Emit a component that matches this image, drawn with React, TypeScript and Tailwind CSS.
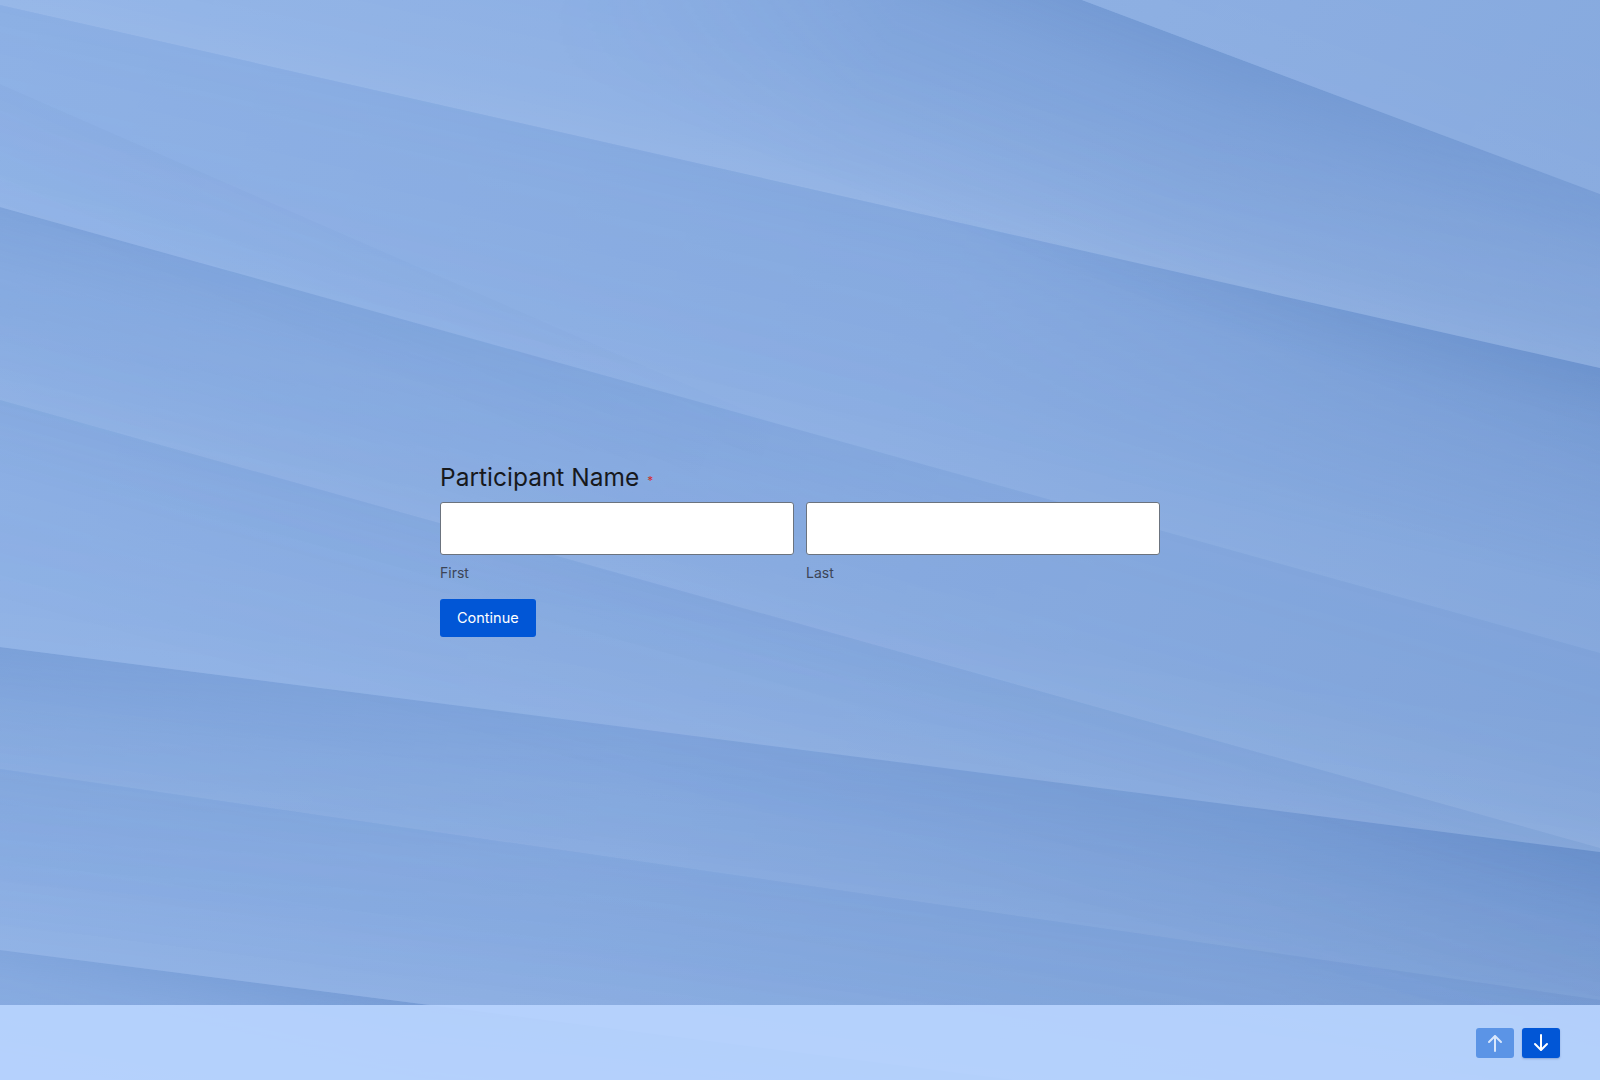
import React from 'react';

type Stop = [number, number];

type BandProps = {
  id: string;
  from: [number, number];
  to: [number, number];
  depth: number;
  color: string;
  alpha: Stop[];
  above?: boolean;
};

// one soft fold of the backdrop: a strip laid along a line, fading away from it
function Band({ id, from, to, depth, color, alpha, above }: BandProps) {
  const dx = to[0] - from[0];
  const dy = to[1] - from[1];
  const len = Math.hypot(dx, dy);
  const angle = (Math.atan2(dy, dx) * 180) / Math.PI;
  const ext = 500;
  const total = len + ext * 2;
  const y = above ? -depth : 0;
  // fade out at both far ends so the strip never shows a hard edge
  const stops: Stop[] = [[-ext / len, 0], ...alpha, [1 + ext / len, 0]];

  return (
    <g transform={`translate(${from[0]} ${from[1]}) rotate(${angle})`}>
      <defs>
        <linearGradient id={`${id}-f`} x1="0" y1={above ? 1 : 0} x2="0" y2={above ? 0 : 1}>
          <stop offset="0" stopColor={color} stopOpacity={1} />
          <stop offset="0.25" stopColor={color} stopOpacity={0.55} />
          <stop offset="1" stopColor={color} stopOpacity={0} />
        </linearGradient>
        <linearGradient id={`${id}-a`} x1="0" y1="0" x2="1" y2="0">
          {stops.map(([t, a], i) => (
            <stop
              key={i}
              offset={Math.min(1, Math.max(0, (ext + t * len) / total))}
              stopColor="#fff"
              stopOpacity={a}
            />
          ))}
        </linearGradient>
        <mask id={`${id}-m`}>
          <rect x={-ext} y={y} width={total} height={depth} fill={`url(#${id}-a)`} />
        </mask>
      </defs>
      <rect
        x={-ext}
        y={y}
        width={total}
        height={depth}
        fill={`url(#${id}-f)`}
        mask={`url(#${id}-m)`}
      />
    </g>
  );
}

const shade = '#2b5aa3';
const light = '#ffffff';

const bands: BandProps[] = [
  { id: 'a', from: [1082, 0], to: [1600, 194], depth: 260, color: shade, alpha: [[-0.3, 0.22], [0.3, 0.22], [1.1, 0.12]] },
  { id: 'a2', from: [1082, 0], to: [1600, 194], depth: 300, color: light, alpha: [[-0.2, 0.03], [1.1, 0.04]], above: true },
  { id: 'b', from: [0, 5], to: [1600, 368], depth: 220, color: shade, alpha: [[-0.1, 0.03], [0.6, 0.07], [0.85, 0.18], [1.1, 0.26]] },
  { id: 'b2', from: [0, 5], to: [1600, 368], depth: 150, color: light, alpha: [[-0.1, 0.07], [0.6, 0.09], [1.1, 0.08]], above: true },
  { id: 'h', from: [0, 84], to: [800, 434], depth: 120, color: shade, alpha: [[-0.1, 0.03], [0.7, 0.02], [1.0, 0]] },
  { id: 'c', from: [0, 207], to: [1600, 653], depth: 260, color: shade, alpha: [[-0.1, 0.18], [0.3, 0.1], [0.7, 0.04], [1.1, 0.04]] },
  { id: 'c2', from: [0, 207], to: [1600, 653], depth: 120, color: light, alpha: [[-0.1, 0.05], [1.1, 0.03]], above: true },
  { id: 'd', from: [0, 400], to: [1600, 848], depth: 200, color: shade, alpha: [[-0.1, 0.05], [1.1, 0.07]] },
  { id: 'd2', from: [0, 400], to: [1600, 848], depth: 100, color: light, alpha: [[-0.1, 0.05], [1.1, 0.04]], above: true },
  { id: 'e', from: [0, 647], to: [1600, 852], depth: 280, color: shade, alpha: [[-0.1, 0.2], [0.4, 0.1], [0.8, 0.14], [1.1, 0.26]] },
  { id: 'e2', from: [0, 647], to: [1600, 852], depth: 150, color: light, alpha: [[-0.1, 0.04], [0.5, 0.06], [1.1, 0.08]], above: true },
  { id: 'f', from: [0, 769], to: [1600, 1000], depth: 120, color: shade, alpha: [[-0.1, 0.03], [1.1, 0.04]] },
  { id: 'f2', from: [0, 769], to: [1600, 1000], depth: 100, color: light, alpha: [[-0.1, 0.05], [1.1, 0.03]], above: true },
  { id: 'g', from: [0, 950], to: [1600, 1155], depth: 120, color: shade, alpha: [[-0.1, 0.08], [0.27, 0.2], [0.6, 0.12]] },
  { id: 'g2', from: [0, 950], to: [1600, 1155], depth: 100, color: light, alpha: [[-0.1, 0.05], [1.1, 0.03]], above: true },
];

function Backdrop() {
  return (
    <svg
      className="absolute inset-0 h-full w-full"
      viewBox="0 0 1600 1080"
      preserveAspectRatio="none"
      aria-hidden="true"
    >
      <defs>
        <linearGradient id="base" x1="0" y1="0" x2="1600" y2="1080" gradientUnits="userSpaceOnUse">
          <stop offset="0" stopColor="#90b3e7" />
          <stop offset="0.5" stopColor="#8aade2" />
          <stop offset="1" stopColor="#81a4da" />
        </linearGradient>
      </defs>
      <rect width="1600" height="1080" fill="url(#base)" />
      {bands.map(b => (
        <Band key={b.id} {...b} />
      ))}
    </svg>
  );
}

function ArrowUpIcon() {
  return (
    <svg width="16" height="18" viewBox="0 0 16 18" fill="none" stroke="currentColor" strokeWidth="2" strokeLinecap="round" strokeLinejoin="round">
      <path d="M2 8 8 2l6 6" />
      <path d="M8 2.5V17" />
    </svg>
  );
}

function ArrowDownIcon() {
  return (
    <svg width="16" height="18" viewBox="0 0 16 18" fill="none" stroke="currentColor" strokeWidth="2" strokeLinecap="round" strokeLinejoin="round">
      <path d="M2 10l6 6 6-6" />
      <path d="M8 1v14.5" />
    </svg>
  );
}

export default function App() {
  return (
    <div className="relative h-screen w-full overflow-hidden bg-[#8aade2] font-['Inter','Noto_Sans',sans-serif]">
      <Backdrop />

      <div className="relative flex h-full flex-col">
        <main className="flex flex-1 justify-center pt-[461px]">
          <form className="w-[720px]" onSubmit={e => e.preventDefault()}>
            <label className="block text-[24.5px] leading-8 text-[#17191d]">
              Participant Name
              <span className="relative top-[2px] ml-[8px] align-middle text-[12px] text-[#d02f2b]">*</span>
            </label>

            <div className="mt-[7px] grid grid-cols-2 gap-3">
              <div>
                <input
                  type="text"
                  className="block h-[53px] w-full rounded-[3px] border border-[#6b737e] bg-white px-3 text-[16px] outline-none"
                />
                <p className="mt-2 text-[14px] leading-5 text-[#3c4557]">First</p>
              </div>
              <div>
                <input
                  type="text"
                  className="block h-[53px] w-full rounded-[3px] border border-[#6b737e] bg-white px-3 text-[16px] outline-none"
                />
                <p className="mt-2 text-[14px] leading-5 text-[#3c4557]">Last</p>
              </div>
            </div>

            <button
              type="submit"
              className="mt-[16px] h-[38px] rounded-[3px] bg-[#0156d6] px-[17px] text-[14.5px] font-normal text-white"
            >
              Continue
            </button>
          </form>
        </main>

        <footer className="flex h-[75px] items-center justify-end gap-2 bg-[rgba(185,213,255,0.9)] pr-10">
          <button
            type="button"
            className="flex h-[30px] w-[38px] items-center justify-center rounded-[3px] bg-[#5b94e6] text-[#d9e7fc]"
          >
            <ArrowUpIcon />
          </button>
          <button
            type="button"
            className="flex h-[30px] w-[38px] items-center justify-center rounded-[3px] bg-[#0156d6] text-white shadow-[0_1px_2px_rgba(0,40,120,0.25)]"
          >
            <ArrowDownIcon />
          </button>
        </footer>
      </div>
    </div>
  );
}
